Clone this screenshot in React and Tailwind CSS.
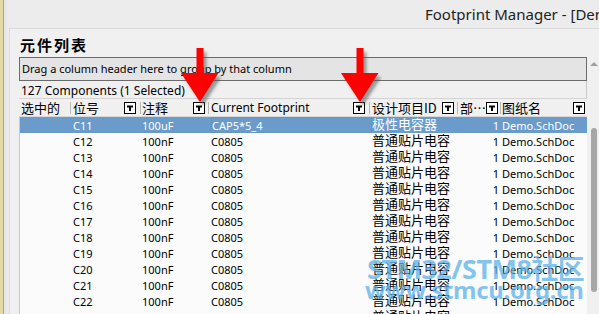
import React from 'react';

const rows = [
  ['C11', '100uF', 'CAP5*5_4', '极性电容器'],
  ['C12', '100nF', 'C0805', '普通贴片电容'],
  ['C13', '100nF', 'C0805', '普通贴片电容'],
  ['C14', '100nF', 'C0805', '普通贴片电容'],
  ['C15', '100nF', 'C0805', '普通贴片电容'],
  ['C16', '100nF', 'C0805', '普通贴片电容'],
  ['C17', '100nF', 'C0805', '普通贴片电容'],
  ['C18', '100nF', 'C0805', '普通贴片电容'],
  ['C19', '100nF', 'C0805', '普通贴片电容'],
  ['C20', '100nF', 'C0805', '普通贴片电容'],
  ['C21', '100nF', 'C0805', '普通贴片电容'],
  ['C22', '100nF', 'C0805', '普通贴片电容'],
  ['C23', '100nF', 'C0805', '普通贴片电容'],
];

const FilterIcon = () => (
  <span className="inline-flex w-[12px] h-[12px] border border-black bg-white items-center justify-center shrink-0">
    <svg width="10" height="10" viewBox="0 0 10 10">
      <path d="M2 2.5h6v2H6v3.5H4V4.5H2z" fill="#000" />
    </svg>
  </span>
);

const Arrow = ({ className }) => (
  <svg className={className} width="44" height="60" viewBox="0 0 44 60">
    <defs>
      <filter id="sh" x="-30%" y="-30%" width="160%" height="160%">
        <feGaussianBlur stdDeviation="1.5" />
      </filter>
    </defs>
    <path d="M18.5 4h7v25h15L22 58 3 29h15.5z" fill="#555" opacity="0.55" filter="url(#sh)" transform="translate(3 2)" />
    <path d="M18.5 2h7v25h15L22 56 3 27h15.5z" fill="#ff0000" />
  </svg>
);

const Sep = () => <span className="w-px h-[12px] bg-[#b8b8b8] shrink-0" />;

const cjk = { fontFamily: '"Noto Sans CJK SC", sans-serif' };
const latin = { fontFamily: '"Noto Sans", "Noto Sans CJK SC", sans-serif' };

export default function App() {
  return (
    <div className="relative w-[599px] h-[314px] overflow-hidden bg-[#ececec] flex text-black" style={latin}>
      {/* left edge strip of another window */}
      <div className="w-[3px] h-full bg-[#e6d9a8] shrink-0" />
      <div className="w-[4px] h-full bg-[#e8e8e8] border-l border-[#9aa6b8] shrink-0" />
      <div className="flex-1 flex flex-col min-w-0">
        {/* title bar */}
        <div className="h-[28px] shrink-0 flex items-center pl-[418px] whitespace-nowrap overflow-hidden text-[15px] text-[#222]">
          Footprint Manager - [Demo.PrjPcb]
        </div>
        {/* panel */}
        <div className="flex-1 flex flex-col bg-[#f0f0f0] border-t border-l border-[#dadada] ml-[2px] min-h-0">
          <div className="h-[28px] shrink-0 pl-[10px] pt-[7px] text-[15px] font-bold tracking-[2px] leading-[18px]" style={cjk}>
            元件列表
          </div>
          <div className="flex-1 flex min-h-0">
            {/* grid */}
            <div className="ml-[9px] w-[568px] flex flex-col min-h-0 text-[11px]">
              <div className="h-[24px] shrink-0 border border-[#6b6b6b] bg-[#e4e4e4] flex items-center pl-[2px] leading-[16px]">
                Drag a column header here to group by that column
              </div>
              <div className="h-[18px] shrink-0 flex items-center pt-[2px] pl-[2px] border-r border-[#c8c8c8] border-b border-b-[#d4d4d4] leading-[16px] text-[12px]">
                127 Components (1 Selected)
              </div>
              {/* header */}
              <div className="h-[18px] shrink-0 flex items-center text-[13px] leading-[16px] bg-[#f0f0f0] border-b border-[#d8d8d8]" style={cjk}>
                <div className="w-[51px] pl-[2px] flex items-center shrink-0">选中的</div>
                <Sep />
                <div className="w-[69px] pl-[2px] pr-[4px] flex items-center justify-between shrink-0">位号<FilterIcon /></div>
                <Sep />
                <div className="w-[67px] pl-[1px] pr-[3px] flex items-center justify-between shrink-0">注释<FilterIcon /></div>
                <Sep />
                <div className="w-[160px] pl-[2px] pr-[4px] flex items-center justify-between shrink-0"><span className="text-[12px]" style={latin}>Current Footprint</span><FilterIcon /></div>
                <Sep />
                <div className="w-[87px] pl-[2px] pr-[3px] flex items-center justify-between shrink-0">设计项目ID<FilterIcon /></div>
                <Sep />
                <div className="w-[42px] pl-[2px] pr-[5px] flex items-center justify-between shrink-0">部…<FilterIcon /></div>
                <Sep />
                <div className="flex-1 pl-[1px] pr-[2px] flex items-center justify-between">图纸名<FilterIcon /></div>
              </div>
              {/* rows */}
              <div className="flex-1 bg-[#fbfbfb] border-l border-[#c8c8c8] min-h-0 overflow-hidden">
                {rows.map((r, i) => {
                  const sel = i === 0;
                  return (
                    <div key={r[0]} className={`h-[16px] flex leading-[16px] whitespace-nowrap ${sel ? 'bg-[#6a9bcb] text-white' : ''}`}>
                      <div className="w-[53px] shrink-0" />
                      <div className="w-[69px] shrink-0 pt-[1px]">{r[0]}</div>
                      <div className="w-[69px] shrink-0 pt-[1px]">{r[1]}</div>
                      <div className={`w-[161px] h-full shrink-0 ${sel ? 'border border-dotted border-[#c0792a] leading-[14px] pt-[1px]' : 'pt-[1px]'}`}>{r[2]}</div>
                      <div className="w-[117px] h-full shrink-0 text-[13px] leading-[14px]" style={cjk}>{r[3]}</div>
                      <div className="w-[10px] shrink-0 text-right pt-[1px]">1</div>
                      <div className="flex-1 pl-[3px] pt-[1px]">Demo.SchDoc</div>
                    </div>
                  );
                })}
              </div>
            </div>
            {/* scrollbar */}
            <div className="ml-[2px] flex-1 bg-[#f0f0f0] flex flex-col items-center pt-[4px]">
              <svg width="8" height="5" viewBox="0 0 8 5"><path d="M0 5L4 1l4 4z" fill="#a0a0a0" /></svg>
              <div className="mt-[62px] w-[6px] h-[164px] rounded-[3px] bg-[#a6a6a6]" />
            </div>
          </div>
        </div>
      </div>

      {/* red arrows overlay */}
      <Arrow className="absolute left-[178px] top-[46px]" />
      <Arrow className="absolute left-[338px] top-[46px]" />

      {/* watermark */}
      <div className="absolute left-[367px] top-[255px] pointer-events-none leading-none text-[#5cb2e8]/75 font-bold whitespace-nowrap" style={latin}>
        <div className="text-[27px] tracking-[-0.5px]">STM32/STM8社区</div>
        <div className="text-[24px] -mt-[4px] ml-[-2px] tracking-[-0.3px]">www.stmcu.org.cn</div>
      </div>
    </div>
  );
}
